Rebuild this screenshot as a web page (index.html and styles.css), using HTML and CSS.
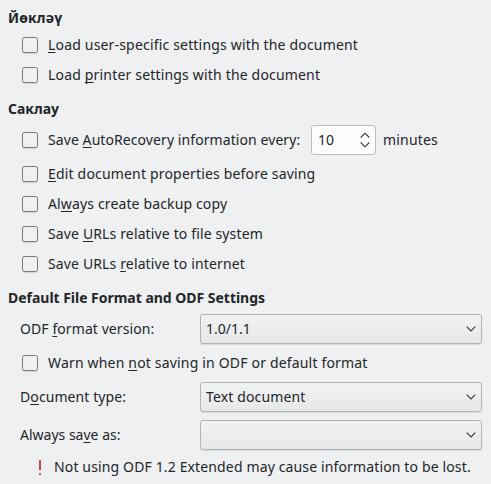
FILE: index.html
```
<!DOCTYPE html>
<html lang="tt">
<head>
<meta charset="utf-8">
<title>Load/Save</title>
<link rel="stylesheet" href="styles.css">
</head>
<body>
<section class="group">
  <h2 class="loose">Йөкләү</h2>
  <label class="row"><span class="box"></span><span class="wide"><u>L</u>oad user-specific settings with the document</span></label>
  <label class="row"><span class="box"></span><span class="wide">Load <u>p</u>rinter settings with the document</span></label>
</section>
<section class="group">
  <h2>Саклау</h2>
  <div class="row timed"><span class="box"></span><span class="every snug">Save <u>A</u>utoRecovery information every:</span>
    <span class="spin"><span>10</span><svg width="10" height="16" viewBox="0 0 10 16"><path d="M.7 5.5 5 1.2l4.3 4.3M.7 10.5 5 14.8l4.3-4.3"/></svg></span>
    <span class="wide">minutes</span></div>
  <label class="row"><span class="box"></span><span class="wide"><u>E</u>dit document properties before saving</span></label>
  <label class="row"><span class="box"></span><span class="loose">Al<u>w</u>ays create backup copy</span></label>
  <label class="row"><span class="box"></span><span class="loose">Save <u>U</u>RLs relative to file system</span></label>
  <label class="row"><span class="box"></span><span class="loose">Save URLs <u>r</u>elative to internet</span></label>
</section>
<section class="group">
  <h2 class="tight">Default File Format and ODF Settings</h2>
  <div class="field"><span class="name snug">ODF <u>f</u>ormat version:</span><span class="select"><span>1.0/1.1</span><svg width="10" height="6" viewBox="0 0 10 6"><path d="M.7.7 5 5 9.3.7"/></svg></span></div>
  <label class="row warn"><span class="box"></span><span class="wide">Warn when <u>n</u>ot saving in ODF or default format</span></label>
  <div class="field"><span class="name snug">D<u>o</u>cument type:</span><span class="select"><span class="loose">Text document</span><svg width="10" height="6" viewBox="0 0 10 6"><path d="M.7.7 5 5 9.3.7"/></svg></span></div>
  <div class="field last"><span class="name">Always sa<u>v</u>e as:</span><span class="select"><span></span><svg width="10" height="6" viewBox="0 0 10 6"><path d="M.7.7 5 5 9.3.7"/></svg></span></div>
  <div class="note"><svg width="2" height="15" viewBox="0 0 2 15"><path d="M0 0h2v10H0zM0 13h2v2H0z"/></svg><span class="loose">Not using ODF 1.2 Extended may cause information to be lost.</span></div>
</section>
</body>
</html>
```
FILE: styles.css
```
* { box-sizing: border-box; }
body {
  margin: 0;
  padding: 6px 9px 0 8px;
  background: #eff0f1;
  color: #232629;
  font: 14px/24px "Noto Sans", sans-serif;
  white-space: nowrap;
}
h2 { margin: 0; height: 24px; font-size: 14px; font-weight: 700; line-height: 24px; }
.group + .group { padding-top: 7px; }
u { text-decoration: underline 1px; text-underline-offset: 2px; text-decoration-skip-ink: none; }
.wide { letter-spacing: 0.178px; }
.loose { letter-spacing: 0.138px; }
.snug { letter-spacing: 0.08px; }
.tight { letter-spacing: -0.025px; }
.row { display: flex; align-items: center; height: 30px; padding-left: 14px; }
.box {
  flex: none;
  width: 16px;
  height: 16px;
  margin-right: 10px;
  border: 1px solid #77797b;
  border-radius: 2.5px;
  box-shadow: 0 1px 1px #d2d3d5;
}
.timed { margin: 4px 0; }
.every { width: 263px; }
.spin {
  display: flex;
  align-items: center;
  justify-content: space-between;
  width: 65px;
  height: 30px;
  margin-right: 7px;
  padding: 0 5px 0 6px;
  border: 1px solid #bbbdbf;
  border-radius: 3px;
  background: #fcfcfc;
}
svg { display: block; flex: none; fill: none; stroke: #34373a; stroke-width: 1.1; }
.field { display: flex; align-items: center; height: 30px; margin-top: 4px; padding-left: 12px; }
.name { width: 180px; }
.select {
  display: flex;
  flex: 1;
  align-items: center;
  justify-content: space-between;
  height: 30px;
  padding: 0 5px;
  border: 1px solid #b1b3b5;
  border-radius: 3px;
  background: linear-gradient(#f1f2f3, #e7e8ea);
  box-shadow: 0 1px 1px #d6d7d9;
}
.warn { margin-top: 4px; }
.last { margin-top: 8px; }
.note { display: flex; align-items: center; height: 24px; margin-top: 5px; padding-left: 31px; gap: 13px; }
.note svg { fill: #da4453; stroke: none; }
```
